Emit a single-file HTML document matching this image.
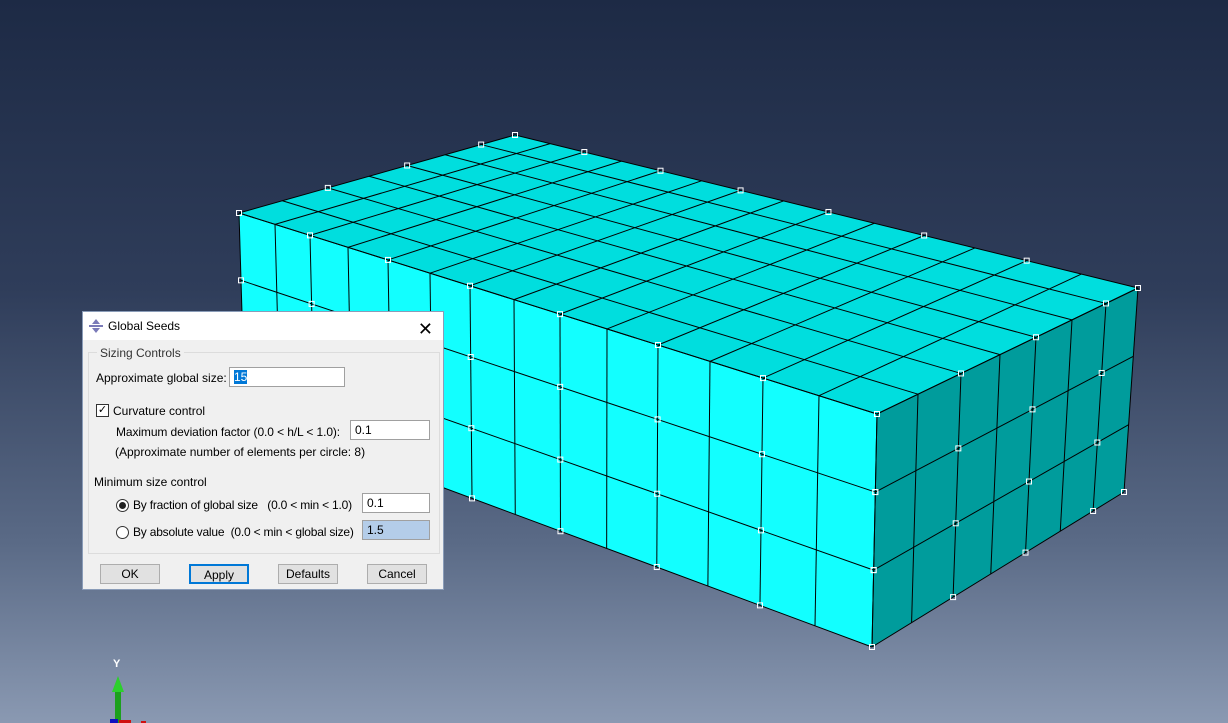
<!DOCTYPE html><html><head><style>
body{margin:0;width:1228px;height:723px;overflow:hidden;background:linear-gradient(#1d2a45 0%,#2f3d5a 40%,#5a6a86 75%,#8a99b2 100%);font-family:"Liberation Sans",sans-serif;font-size:12px;position:relative}
svg{position:absolute;left:0;top:0}
.dlg{position:absolute;left:82px;top:311px;width:360px;height:277px;background:#f0f0f0;border:1px solid #8a9cb8}
.tb{height:28px;background:#fff;position:relative}
.tb span{position:absolute;left:25px;top:7px}
.x{position:absolute;right:10px;top:3px;font-size:18px}
.a{position:absolute;white-space:nowrap}
.in{position:absolute;background:#fff;border:1px solid #a0a0a0;height:20px;box-sizing:border-box;padding:2px 4px}
.btn{position:absolute;top:252px;height:20px;width:60px;box-sizing:border-box;border:1px solid #adadad;background:#e1e1e1;text-align:center;line-height:18px}
.rad{position:absolute;width:11px;height:11px;border:1px solid #333;border-radius:50%;background:#fff}
</style></head><body>
<svg width="1228" height="723" id="s"></svg>
<div class="dlg">
<div class="tb"><svg width="16" height="16" style="left:5px;top:6px"><path d="M8 1 L12 6 H4Z M8 15 L12 10 H4Z" fill="#7a7ab8"/><rect x="1" y="7" width="14" height="2" fill="#7a7ab8"/></svg><span>Global Seeds</span><span class="x" style="left:auto">✕</span></div>
<div style="position:absolute;left:5px;top:40px;width:350px;height:200px;border:1px solid #dcdcdc"></div>
<div class="a" style="left:14px;top:34px;background:#f0f0f0;padding:0 3px;color:#333">Sizing Controls</div>
<div class="a" style="left:13px;top:59px">Approximate global size:</div>
<div class="in" style="left:146px;top:55px;width:116px"><span style="background:#0078d7;color:#fff">15</span></div>
<div style="position:absolute;left:13px;top:92px;width:11px;height:11px;border:1px solid #333;background:#fff;font-size:11px;line-height:11px;text-align:center">✓</div>
<div class="a" style="left:30px;top:92px">Curvature control</div>
<div class="a" style="left:33px;top:113px;letter-spacing:-0.1px">Maximum deviation factor (0.0 &lt; h/L &lt; 1.0):</div>
<div class="in" style="left:267px;top:108px;width:80px">0.1</div>
<div class="a" style="left:32px;top:133px">(Approximate number of elements per circle: 8)</div>
<div class="a" style="left:11px;top:163px">Minimum size control</div>
<div class="rad" style="left:33px;top:187px"><div style="width:7px;height:7px;border-radius:50%;background:#222;margin:2px"></div></div>
<div class="a" style="left:50px;top:186px;letter-spacing:-0.2px">By fraction of global size &nbsp;&nbsp;(0.0 &lt; min &lt; 1.0)</div>
<div class="in" style="left:279px;top:181px;width:68px">0.1</div>
<div class="rad" style="left:33px;top:214px"></div>
<div class="a" style="left:50px;top:213px;letter-spacing:-0.2px">By absolute value &nbsp;(0.0 &lt; min &lt; global size)</div>
<div class="in" style="left:279px;top:208px;width:68px;background:#b4cde9">1.5</div>
<div class="btn" style="left:17px">OK</div>
<div class="btn" style="left:106px;border:2px solid #0078d7">Apply</div>
<div class="btn" style="left:195px">Defaults</div>
<div class="btn" style="left:284px">Cancel</div>
</div>
<script>
const s=document.getElementById('s');let h='';
const A=[239,213],B=[515,135],C=[1138,288],D=[877,414];
const A2=[245,414],D2=[872,647],C2=[1124,492];
const L=(p,q,t)=>[p[0]+(q[0]-p[0])*t,p[1]+(q[1]-p[1])*t];
const P=a=>a.map(p=>p.join(',')).join(' ');
h+=`<polygon points="${P([A,B,C,D])}" fill="#00dede"/>`;
h+=`<polygon points="${P([A,D,D2,A2])}" fill="#12ffff"/>`;
h+=`<polygon points="${P([D,C,C2,D2])}" fill="#009c9c"/>`;
const fx=[239,275,310,348,388,430,470,514,560,607,658,710,763,819,877].map(x=>(x-239)/638);
const fd=[877,918,961,1000,1036,1072,1106,1138].map(x=>(x-877)/261);
const fv=[0,.335,.67,1];
const ln=(p,q)=>h+=`<line x1="${p[0]}" y1="${p[1]}" x2="${q[0]}" y2="${q[1]}" stroke="#000" stroke-width="1"/>`;
fx.forEach(t=>{ln(L(A,D,t),L(A2,D2,t));ln(L(A,D,t),L(B,C,t));});
fd.forEach(t=>{ln(L(D,C,t),L(D2,C2,t));ln(L(D,C,t),L(A,B,t));});
fv.forEach(t=>{ln(L(A,A2,t),L(D,D2,t));ln(L(D,D2,t),L(C,C2,t));});
const nd=p=>h+=`<rect x="${p[0]-2.5}" y="${p[1]-2.5}" width="5" height="5" fill="none" stroke="#fff"/>`;
fx.forEach((t,i)=>{if(i%2==0)nd(L(A,D,t));if(i%2==0)nd(L(B,C,t));fv.forEach(v=>{if(i%2==0&&v>0)nd(L(L(A,A2,v),L(D,D2,v),t))})});
fd.forEach((t,i)=>{if(i%2==0){nd(L(D,C,t));nd(L(A,B,t));fv.forEach(v=>{if(v>0)nd(L(L(D,D2,v),L(C,C2,v),t))})}});
nd(C);nd(C2);nd(D2);
h+=`<text x="113" y="667" fill="#fff" font-size="11" font-family="Liberation Sans" font-weight="bold">Y</text>`;
h+=`<rect x="115" y="690" width="6" height="33" fill="#1ca01c"/><polygon points="118,676 112,692 124,692" fill="#2cd02c"/>`;
h+=`<rect x="110" y="719" width="8" height="4" fill="#1010c0"/><rect x="119" y="720" width="12" height="3" fill="#d01010"/><rect x="141" y="721" width="5" height="2" fill="#d01010"/>`;
s.innerHTML=h;
</script>
</body></html>
